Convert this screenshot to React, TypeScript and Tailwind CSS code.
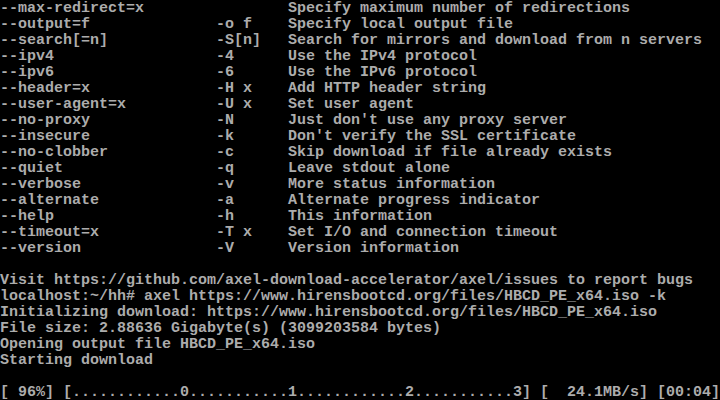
import React from 'react';

// axel --help tail, as seen on an 80x25 text console (9x16 cells)
const options: [string, string, string][] = [
    ['--max-redirect=x', '', 'Specify maximum number of redirections'],
    ['--output=f', '-o f', 'Specify local output file'],
    ['--search[=n]', '-S[n]', 'Search for mirrors and download from n servers'],
    ['--ipv4', '-4', 'Use the IPv4 protocol'],
    ['--ipv6', '-6', 'Use the IPv6 protocol'],
    ['--header=x', '-H x', 'Add HTTP header string'],
    ['--user-agent=x', '-U x', 'Set user agent'],
    ['--no-proxy', '-N', "Just don't use any proxy server"],
    ['--insecure', '-k', "Don't verify the SSL certificate"],
    ['--no-clobber', '-c', 'Skip download if file already exists'],
    ['--quiet', '-q', 'Leave stdout alone'],
    ['--verbose', '-v', 'More status information'],
    ['--alternate', '-a', 'Alternate progress indicator'],
    ['--help', '-h', 'This information'],
    ['--timeout=x', '-T x', 'Set I/O and connection timeout'],
    ['--version', '-V', 'Version information'],
];

const output = [
    '',
    'Visit https://github.com/axel-download-accelerator/axel/issues to report bugs',
    'localhost:~/hh# axel https://www.hirensbootcd.org/files/HBCD_PE_x64.iso -k',
    'Initializing download: https://www.hirensbootcd.org/files/HBCD_PE_x64.iso',
    'File size: 2.88636 Gigabyte(s) (3099203584 bytes)',
    'Opening output file HBCD_PE_x64.iso',
    'Starting download',
    '',
];

const bar =
    '.'.repeat(12) + '0' + '.'.repeat(11) + '1' + '.'.repeat(12) + '2' + '.'.repeat(11) + '3';

const App: React.FC = () => {
    return (
        <div
            className="w-[720px] h-[400px] overflow-hidden bg-black text-[#acacac] text-[15px] leading-[16px] font-bold whitespace-pre pt-[1px]"
            style={{ fontFamily: '"Liberation Mono", "DejaVu Sans Mono", monospace' }}
        >
            <div className="grid grid-cols-[216px_72px_1fr]">
                {options.map(([long, short, desc]) => (
                    <React.Fragment key={long}>
                        <div className="h-[16px]">{long}</div>
                        <div className="h-[16px]">{short}</div>
                        <div className="h-[16px]">{desc}</div>
                    </React.Fragment>
                ))}
            </div>
            {output.map((line, i) => (
                <div key={i} className="h-[16px]">{line}</div>
            ))}
            <div className="h-[16px] flex">
                <span>[ 96%] [</span>
                <span>{bar}</span>
                <span>] [  24.1MB/s] [00:04]</span>
            </div>
        </div>
    );
};

export default App;
